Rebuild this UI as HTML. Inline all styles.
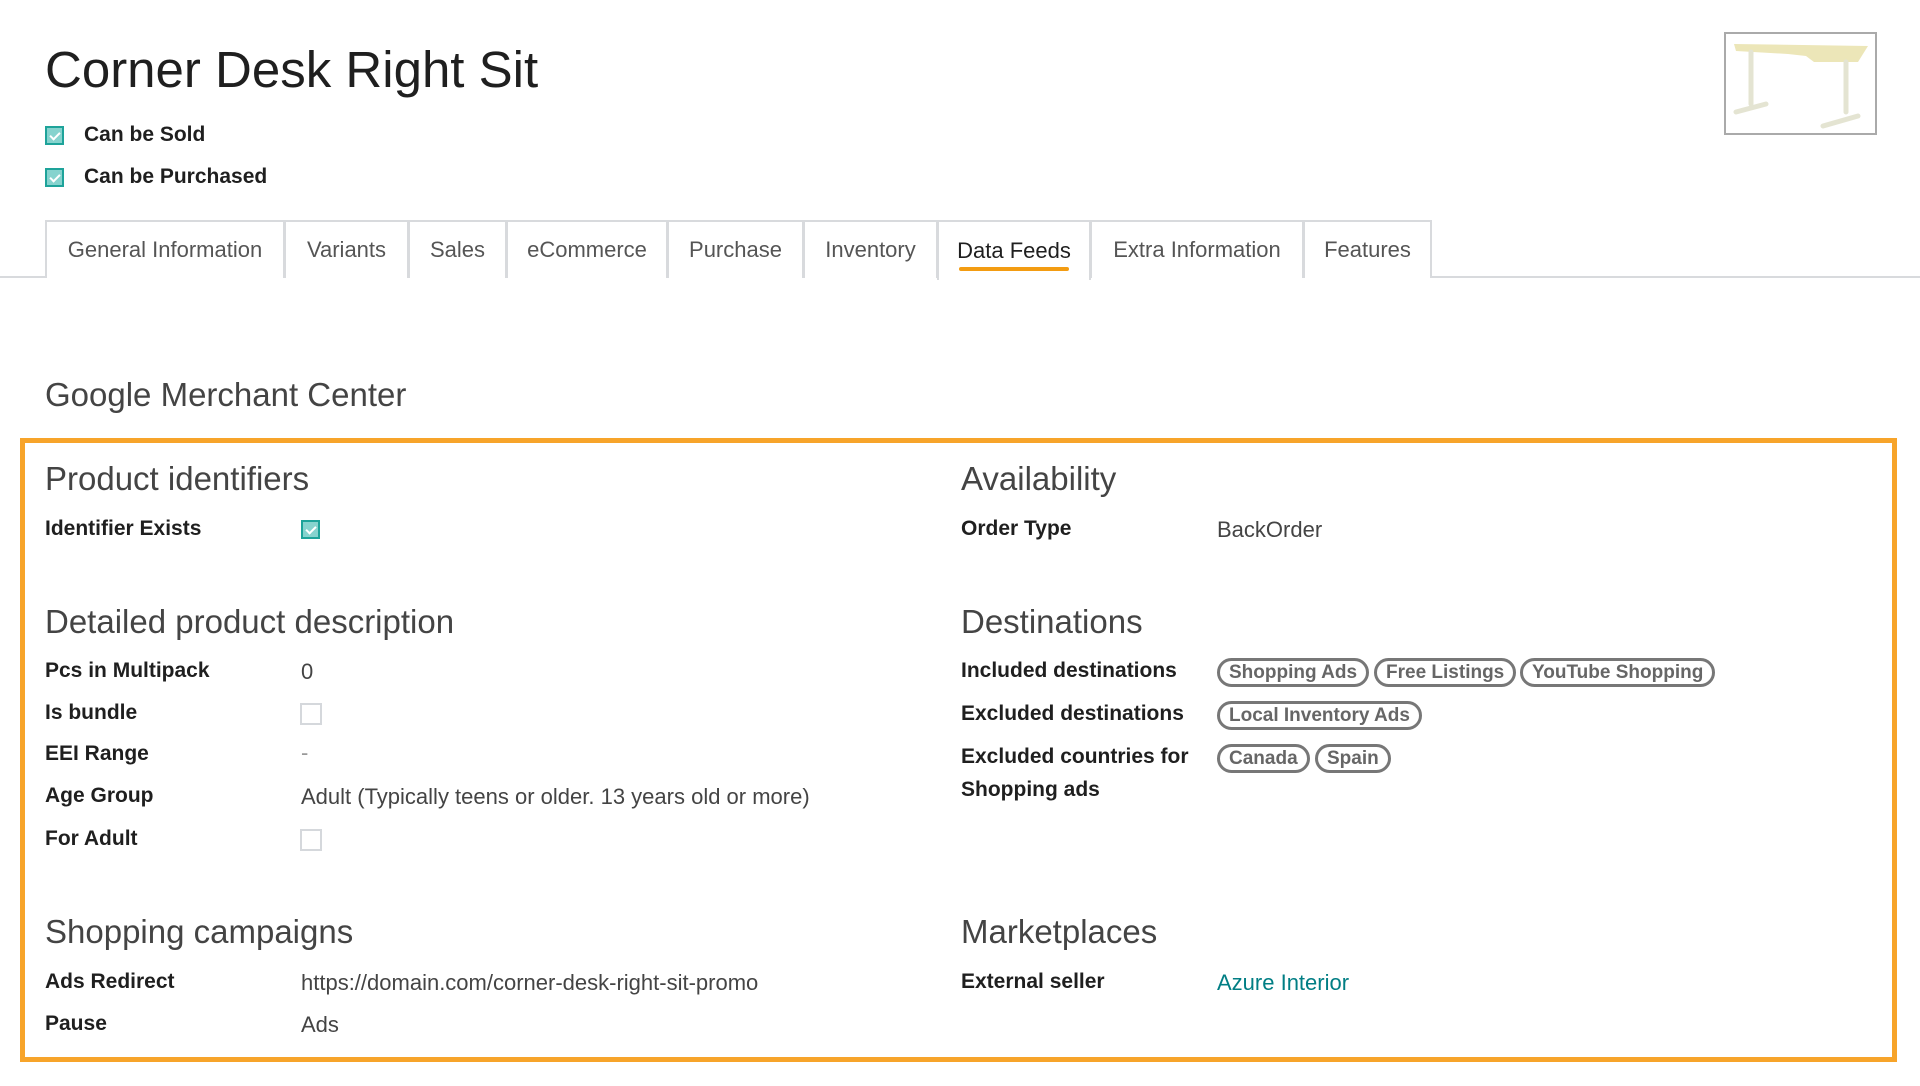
<!DOCTYPE html>
<html><head><meta charset="utf-8"><style>
*{margin:0;padding:0;box-sizing:border-box}
body{width:1920px;height:1086px;background:#fff;font-family:"Liberation Sans",Arial,sans-serif;color:#212529;position:relative;overflow:hidden}
.a{position:absolute;white-space:nowrap}
h1{position:absolute;left:45px;top:40px;font-size:51px;font-weight:400;color:#1f1f1f}
.cb{position:absolute;width:19px;height:19px;border:2px solid #1ea39a;background:#86d3ce}
.cb::after{content:"";position:absolute;left:5px;top:2px;width:4px;height:8px;border:solid #fff;border-width:0 2px 2px 0;transform:rotate(45deg)}
.ecb{position:absolute;width:22px;height:22px;border:2px solid #d5d8dc;background:#fff}
.lbl{font-weight:700;font-size:21px;color:#1f1f1f}
.tabs{position:absolute;left:0;top:276px;width:1920px;border-top:2px solid #d8dadd}
.tab{position:absolute;top:220px;height:58px;border:2px solid #d8dadd;border-bottom:none;font-size:22px;color:#555;display:flex;align-items:center;justify-content:center;background:#fff}
.h2{font-size:33px;color:#444}
.v{font-size:22px;color:#444}
.tag{position:absolute;height:29px;border:3px solid #777;border-radius:15px;font-weight:700;font-size:19px;color:#666;padding:0 9px;line-height:23px;white-space:nowrap}
</style></head><body>
<h1>Corner Desk Right Sit</h1>
<div class="cb" style="left:45px;top:126px"></div><div class="a lbl" style="left:84px;top:123px">Can be Sold</div>
<div class="cb" style="left:45px;top:168px"></div><div class="a lbl" style="left:84px;top:165px">Can be Purchased</div>
<div class="a" style="left:1724px;top:32px;width:153px;height:103px;border:2px solid #aaa;background:#fff">
<svg width="149" height="99" viewBox="0 0 149 99"><path d="M8 10 L142 12 L132 28 L88 28 L80 22 L62 20 L10 17 Z" fill="#ece6b8"/><g stroke="#e4e4d2" stroke-width="5" fill="none" stroke-linecap="round"><path d="M25 18v52M10 78l30-8M120 28v50M97 92l35-10"/></g></svg></div>
<div class="tabs"></div>
<div class="tab" style="left:45px;width:240px">General Information</div>
<div class="tab" style="left:284px;width:125px">Variants</div>
<div class="tab" style="left:408px;width:99px">Sales</div>
<div class="tab" style="left:506px;width:162px">eCommerce</div>
<div class="tab" style="left:667px;width:137px">Purchase</div>
<div class="tab" style="left:803px;width:135px">Inventory</div>
<div class="tab" style="left:937px;width:154px;color:#1f1f1f;height:60px">Data Feeds</div>
<div class="a" style="left:959px;top:267px;width:110px;height:4px;background:#f39c12;border-radius:2px"></div>
<div class="tab" style="left:1090px;width:214px">Extra Information</div>
<div class="tab" style="left:1303px;width:129px">Features</div>
<div class="a h2" style="left:45px;top:376px">Google Merchant Center</div>
<div class="a" style="left:20px;top:438px;width:1877px;height:624px;border:5px solid #f7a42a"></div>
<div class="a h2" style="left:45px;top:460px">Product identifiers</div>
<div class="a lbl" style="left:45px;top:517px">Identifier Exists</div><div class="cb" style="left:301px;top:520px"></div>
<div class="a h2" style="left:45px;top:603px">Detailed product description</div>
<div class="a lbl" style="left:45px;top:659px">Pcs in Multipack</div><div class="a v" style="left:301px;top:659px">0</div>
<div class="a lbl" style="left:45px;top:701px">Is bundle</div><div class="ecb" style="left:300px;top:703px"></div>
<div class="a lbl" style="left:45px;top:742px">EEI Range</div><div class="a v" style="left:301px;top:740px;color:#999">-</div>
<div class="a lbl" style="left:45px;top:784px">Age Group</div><div class="a v" style="left:301px;top:784px">Adult (Typically teens or older. 13 years old or more)</div>
<div class="a lbl" style="left:45px;top:827px">For Adult</div><div class="ecb" style="left:300px;top:829px"></div>
<div class="a h2" style="left:45px;top:913px">Shopping campaigns</div>
<div class="a lbl" style="left:45px;top:970px">Ads Redirect</div><div class="a v" style="left:301px;top:970px">https://domain.com/corner-desk-right-sit-promo</div>
<div class="a lbl" style="left:45px;top:1012px">Pause</div><div class="a v" style="left:301px;top:1012px">Ads</div>
<div class="a h2" style="left:961px;top:460px">Availability</div>
<div class="a lbl" style="left:961px;top:517px">Order Type</div><div class="a v" style="left:1217px;top:517px">BackOrder</div>
<div class="a h2" style="left:961px;top:603px">Destinations</div>
<div class="a lbl" style="left:961px;top:659px">Included destinations</div>
<div class="tag" style="left:1217px;top:658px">Shopping Ads</div>
<div class="tag" style="left:1374px;top:658px">Free Listings</div>
<div class="tag" style="left:1520px;top:658px">YouTube Shopping</div>
<div class="a lbl" style="left:961px;top:702px">Excluded destinations</div>
<div class="tag" style="left:1217px;top:701px">Local Inventory Ads</div>
<div class="a lbl" style="left:961px;top:745px">Excluded countries for</div>
<div class="a lbl" style="left:961px;top:778px">Shopping ads</div>
<div class="tag" style="left:1217px;top:744px">Canada</div>
<div class="tag" style="left:1315px;top:744px">Spain</div>
<div class="a h2" style="left:961px;top:913px">Marketplaces</div>
<div class="a lbl" style="left:961px;top:970px">External seller</div><div class="a v" style="left:1217px;top:970px;color:#017e84">Azure Interior</div>
</body></html>
